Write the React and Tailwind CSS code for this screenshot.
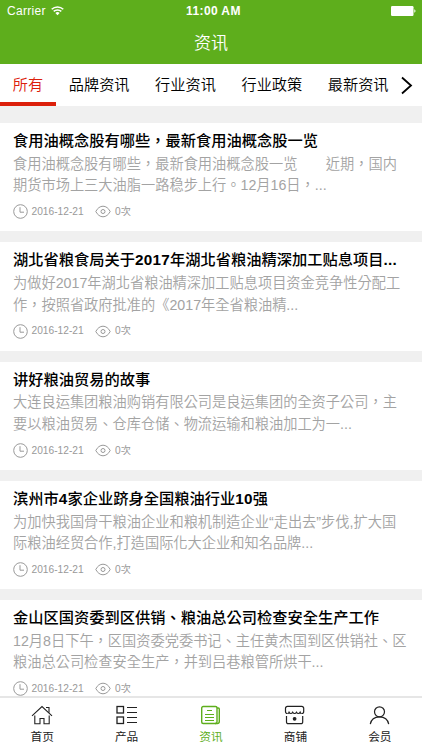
import { useState } from "react";

const tabs = ["所有", "品牌资讯", "行业资讯", "行业政策", "最新资讯"];

const articles = [
  {
    id: 1,
    title: "食用油概念股有哪些，最新食用油概念股一览",
    lines: [
      "食用油概念股有哪些，最新食用油概念股一览　　近期，国内",
      "期货市场上三大油脂一路稳步上行。12月16日，...",
    ],
  },
  {
    id: 2,
    title: "湖北省粮食局关于2017年湖北省粮油精深加工贴息项目...",
    lines: [
      "为做好2017年湖北省粮油精深加工贴息项目资金竞争性分配工",
      "作，按照省政府批准的《2017年全省粮油精...",
    ],
  },
  {
    id: 3,
    title: "讲好粮油贸易的故事",
    lines: [
      "大连良运集团粮油购销有限公司是良运集团的全资子公司，主",
      "要以粮油贸易、仓库仓储、物流运输和粮油加工为一...",
    ],
  },
  {
    id: 4,
    title: "滨州市4家企业跻身全国粮油行业10强",
    lines: [
      "为加快我国骨干粮油企业和粮机制造企业“走出去”步伐,扩大国",
      "际粮油经贸合作,打造国际化大企业和知名品牌...",
    ],
  },
  {
    id: 5,
    title: "金山区国资委到区供销、粮油总公司检查安全生产工作",
    lines: [
      "12月8日下午，区国资委党委书记、主任黄杰国到区供销社、区",
      "粮油总公司检查安全生产，并到吕巷粮管所烘干...",
    ],
  },
];

function StatusBar() {
  return (
    <div className="relative flex h-[22px] items-center justify-between pl-[7px] pr-[6px] text-white">
      <div className="flex items-center gap-[5px]">
        <span className="text-[12px] tracking-[0.3px]">Carrier</span>
        <svg width="13" height="10" viewBox="0 0 13 10" fill="none" stroke="currentColor" strokeWidth="1.5">
          <path d="M.7 3.3a8.3 8.3 0 0 1 11.6 0" />
          <path d="M2.7 5.4a5.5 5.5 0 0 1 7.6 0" />
          <path d="M6.5 9.2 4.4 7.1a3 3 0 0 1 4.2 0z" fill="currentColor" stroke="none" />
        </svg>
      </div>
      <span className="absolute left-[186px] text-[12px] font-semibold tracking-[0.4px]">
        11:00 AM
      </span>
      <svg width="25" height="10" viewBox="0 0 25 10" fill="currentColor">
        <rect width="22.5" height="10" rx="1.2" />
        <path d="M23.3 3.2c1.6.6 1.6 3 0 3.6z" />
      </svg>
    </div>
  );
}

function ClockIcon() {
  return (
    <svg width="15" height="15" viewBox="0 0 15 15" fill="none" stroke="currentColor">
      <circle cx="7.5" cy="7.5" r="6.8" />
      <path d="M7 3.2v5h4" />
    </svg>
  );
}

function EyeIcon() {
  return (
    <svg width="16" height="13" viewBox="0 0 16 13" fill="none" stroke="currentColor">
      <path d="M.8 6.5C2.5 3.2 5 1.2 8 1.2s5.5 2 7.2 5.3C13.5 9.8 11 11.8 8 11.8S2.5 9.8.8 6.5z" />
      <circle cx="8" cy="6.5" r="2" />
    </svg>
  );
}

function HomeIcon() {
  return (
    <svg width="22" height="20" viewBox="0 0 22 20" fill="none" stroke="currentColor" strokeWidth="1.1">
      <path d="M1 10.8 11 1.5l10 9.3" />
      <path d="M15 2.5h3v5.3" />
      <path d="M3.8 10.5v8.3H9v-5.3h4v5.3h5.2v-8.3" />
    </svg>
  );
}

function ProductIcon() {
  return (
    <svg width="22" height="20" viewBox="0 0 22 20" fill="none" stroke="currentColor" strokeWidth="1.3">
      <rect x="1" y="1.5" width="6.5" height="6.5" />
      <rect x="1" y="12" width="6.5" height="6.5" />
      <path d="M11 2.5h10M11 7.5h10M11 12.5h10M11 17.5h10" strokeWidth="1.1" />
    </svg>
  );
}

function NewsIcon() {
  return (
    <svg width="22" height="20" viewBox="0 0 22 20" fill="none" stroke="currentColor" strokeWidth="1.4">
      <rect x="1.7" y="1.5" width="15.3" height="17" rx="1.5" />
      <path d="M17 3h1.3a1 1 0 0 1 1 1v12.5a2 2 0 0 1-2 2H15" />
      <path d="M7 5.5h5M5 9.5h9M5 12.5h9M5 15.5h9" strokeWidth="1.2" />
    </svg>
  );
}

function ShopIcon() {
  return (
    <svg width="22" height="20" viewBox="0 0 22 20" fill="none" stroke="currentColor" strokeWidth="1.2">
      <path d="M3.5 8.5C2 8.5 1.5 7.5 1.5 6.4V3.3a1.9 1.9 0 0 1 1.9-1.9h14.4a1.9 1.9 0 0 1 1.900 1.900v3.100c0 1.100-.5 2.100-2 2.100" />
      <path d="M3.5 8.5q1.2 0 1.6-1.3.7 1.3 1.8 1.3t1.8-1.3q.8 1.3 1.9 1.3t1.9-1.3q.7 1.3 1.8 1.3t1.8-1.3q.4 1.3 1.6 1.3" />
      <path d="M2.5 11v6a1.7 1.7 0 0 0 1.7 1.7H17a1.7 1.7 0 0 0 1.7-1.700v-6" />
      <circle cx="10.6" cy="13.8" r="1.3" fill="currentColor" />
    </svg>
  );
}

function MemberIcon() {
  return (
    <svg width="22" height="20" viewBox="0 0 22 20" fill="none" stroke="currentColor" strokeWidth="1.2">
      <circle cx="10.5" cy="6.8" r="5" />
      <path d="M1.300 19.200c.8-4.400 4.400-7.300 9.200-7.300s8.400 2.900 9.200 7.300" />
    </svg>
  );
}

const navItems = [
  { label: "首页", Icon: HomeIcon },
  { label: "产品", Icon: ProductIcon },
  { label: "资讯", Icon: NewsIcon },
  { label: "商铺", Icon: ShopIcon },
  { label: "会员", Icon: MemberIcon },
];

// Latin digits need the bold face to carry the same weight as the Chinese text
function renderTitle(title) {
  return title.split(/(\d+|\.\.\.)/).map((part, index) =>
    /^[\d.]+$/.test(part) ? (
      <span key={index} className="font-bold tracking-[0.25px]">
        {part}
      </span>
    ) : (
      part
    ),
  );
}

function Article({ article }) {
  return (
    <article className="mb-[11px] h-[108.25px] shrink-0 bg-white pl-[13px] pt-[6px] whitespace-nowrap">
      <h2 className="text-[15.25px] leading-[23px] font-medium text-black">
        {renderTitle(article.title)}
      </h2>
      <div className="mt-[1.75px] text-[14.23px] leading-[21.5px] font-[350] text-[#a3a3a3]">
        {article.lines.map((line) => (
          <p key={line}>{line}</p>
        ))}
      </div>
      <div className="mt-[7.5px] flex h-[15px] items-center text-[10.2px] text-[#999]">
        <ClockIcon />
        <span className="ml-[3.5px] w-[63.5px]">2016-12-21</span>
        <EyeIcon />
        <span className="ml-[4px]">0次</span>
      </div>
    </article>
  );
}

function App() {
  const [activeTab, setActiveTab] = useState("所有");
  const [activeNav, setActiveNav] = useState("资讯");

  return (
    <div className="flex h-[750px] w-[422px] flex-col overflow-hidden bg-[#f0f0f0] font-['Liberation_Sans','Noto_Sans_CJK_TC',sans-serif]">
      <header className="h-[64px] shrink-0 bg-[#5eae1c]">
        <StatusBar />
        <h1 className="text-center text-[17px] leading-[43px] font-[350] text-white">资讯</h1>
      </header>

      {/* Category tabs */}
      <div className="flex h-[42px] shrink-0 bg-white text-[15.2px] font-[350] whitespace-nowrap">
        {tabs.map((tab) => (
          <button
            key={tab}
            onClick={() => setActiveTab(tab)}
            className={`shrink-0 border-b-4 px-[12.8px] pt-[4px] leading-[34px] ${
              activeTab === tab ? "border-[#dc200b] text-[#dc200b]" : "border-transparent text-black"
            }`}>
            {tab}
          </button>
        ))}
        <svg className="mt-3 shrink-0" width="12" height="19" viewBox="0 0 12 19" fill="none" stroke="#000" strokeWidth="1.8">
          <path d="m1 1.5 9 8-9 8" />
        </svg>
      </div>

      <main className="flex min-h-0 flex-1 flex-col overflow-hidden pt-[17px]">
        {articles.map((article) => (
          <Article key={article.id} article={article} />
        ))}
      </main>

      <nav className="flex h-[54px] shrink-0 border-t-2 border-[#e6e6e6] bg-white">
        {navItems.map(({ label, Icon }) => (
          <button
            key={label}
            onClick={() => setActiveNav(label)}
            className={`flex flex-1 flex-col items-center gap-[2px] pt-[7px] text-[11.7px] leading-[20px] ${
              activeNav === label ? "text-[#5eae1c]" : "text-[#222]"
            }`}>
            <Icon />
            <span>{label}</span>
          </button>
        ))}
      </nav>
    </div>
  );
}

export default App;
